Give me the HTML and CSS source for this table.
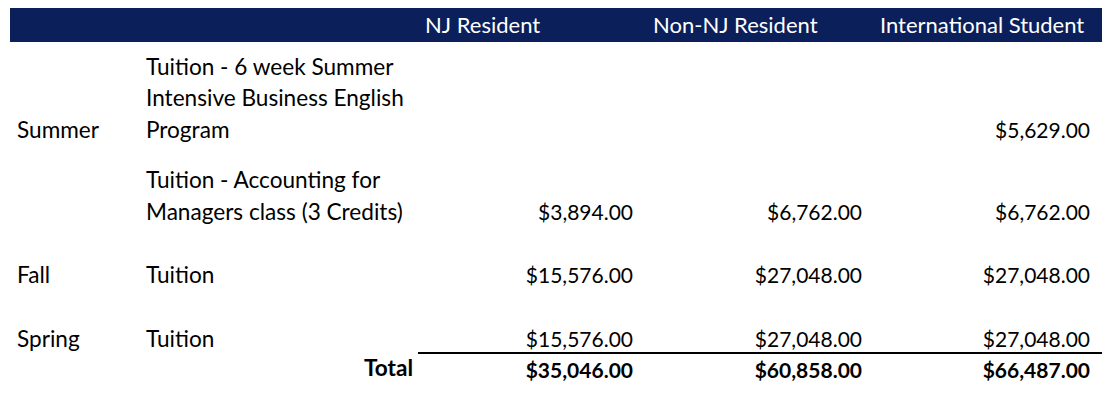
FILE: index.html
```html
<!DOCTYPE html>
<html lang="en">
<head>
<meta charset="utf-8">
<title>Tuition</title>
<link rel="stylesheet" href="styles.css">
</head>
<body>
<div class="sheet">
  <div class="row head">
    <div class="c1"></div>
    <div class="c2"></div>
    <div class="c3">NJ Resident</div>
    <div class="c4">Non-NJ Resident</div>
    <div class="c5">International Student</div>
  </div>
  <div class="row r-a">
    <div class="c1">Summer</div>
    <div class="c2">Tuition - 6 week Summer<br>Intensive Business English<br>Program</div>
    <div class="c3 num"></div>
    <div class="c4 num"></div>
    <div class="c5 num">$5,629.00</div>
  </div>
  <div class="row r-b">
    <div class="c1"></div>
    <div class="c2">Tuition - Accounting for<br>Managers class (3 Credits)</div>
    <div class="c3 num">$3,894.00</div>
    <div class="c4 num">$6,762.00</div>
    <div class="c5 num">$6,762.00</div>
  </div>
  <div class="row r-fall">
    <div class="c1">Fall</div>
    <div class="c2">Tuition</div>
    <div class="c3 num">$15,576.00</div>
    <div class="c4 num">$27,048.00</div>
    <div class="c5 num">$27,048.00</div>
  </div>
  <div class="row r-spring">
    <div class="c1">Spring</div>
    <div class="c2">Tuition</div>
    <div class="c3 num">$15,576.00</div>
    <div class="c4 num">$27,048.00</div>
    <div class="c5 num">$27,048.00</div>
  </div>
  <div class="row r-total">
    <div class="c1"></div>
    <div class="c2 total-label">Total</div>
    <div class="c3 num ruled">$35,046.00</div>
    <div class="c4 num ruled">$60,858.00</div>
    <div class="c5 num ruled">$66,487.00</div>
  </div>
</div>
</body>
</html>
```
FILE: styles.css
```css
html, body {
  margin: 0;
  padding: 0;
  background: #ffffff;
}
body {
  font-family: Lato, "Liberation Sans", sans-serif;
  font-size: 22.6px;
  color: #000000;
}
.sheet {
  padding: 8px 0 0 10px;
  width: 1092px;
}
.row {
  display: grid;
  grid-template-columns: 130px 278px 227px 227px 230px;
  line-height: 31.5px;
}
.row > div {
  align-self: end;
  white-space: nowrap;
}
.c1 { padding-left: 7px; }
.c2 { padding-left: 6px; }
.head {
  height: 34px;
  background: #0b1f5b;
  color: #ffffff;
  font-size: 22px;
}
.head > div {
  align-self: center;
  line-height: 34px;
}
.head .c3 { padding-left: 7px; }
.head .c4 { padding-left: 8px; }
.head .c5 { padding-left: 8px; }
.num {
  text-align: right;
  font-size: 21px;
}
.c3.num { padding-right: 12px; }
.c4.num { padding-right: 10px; }
.c5.num { padding-right: 12px; }
.r-a { height: 104px; padding-bottom: 1px; box-sizing: border-box; }
.r-b { height: 82px; padding-bottom: 1px; box-sizing: border-box; }
.r-fall { height: 62px; }
.r-spring { height: 62px; line-height: 26px; }
.r-total {
  height: 34px;
  font-weight: bold;
}
.r-total > div {
  align-self: stretch;
  line-height: 32px;
}
.total-label {
  text-align: right;
  padding-right: 5px;
}
.ruled {
  border-top: 2px solid #000000;
}
```
